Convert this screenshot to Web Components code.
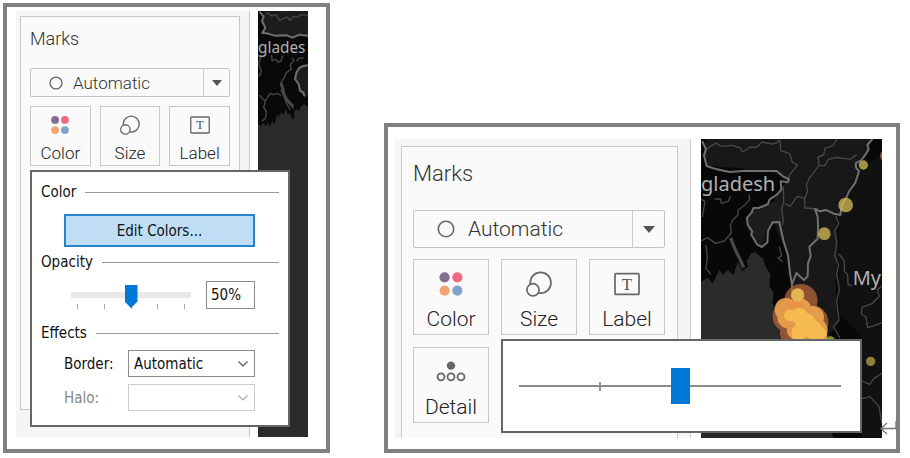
<!DOCTYPE html>
<html lang="en">
<head>
<meta charset="utf-8">
<title>Marks card</title>
<style>
body{margin:0;padding:3px 10px 5px 3px;background:#fff;font-family:Roboto,"Liberation Sans",sans-serif;font-weight:300}
</style>
</head>
<body>
<marks-page></marks-page>
<script>
const define=(name,html,setup)=>{
  const t=document.createElement('template');t.innerHTML=html;
  customElements.define(name,class extends HTMLElement{
    constructor(){super();this.attachShadow({mode:'open'}).append(t.content.cloneNode(true));}
    connectedCallback(){if(setup&&!this.ready){this.ready=true;setup(this,this.shadowRoot);}}
  });
};
const BASE='*{box-sizing:border-box}:host{box-sizing:border-box}';

define('figure-frame',`<style>${BASE}
:host{display:grid;grid-template-columns:minmax(0,234fr) minmax(0,50fr);border:4px solid #808080;background:#fff;position:relative;gap:8px;padding:4px 18px 12px 9px}
:host([size=large]){grid-template-columns:minmax(0,296fr) minmax(0,181fr);gap:10px;padding:12px 14px 11px 7px}
</style><slot></slot>`);

define('marks-panel',`<style>${BASE}
:host{--text:17px;--caption:17px;--title:18px;--line:24px;--field:29px;--icon:20px;--gap:9px;--tile-gap:9px;--tile-top:8px;--label-gap:7px;--label:22px;
 display:flex;min-width:0;background:#f5f5f5;border-right:1px solid #ccc;padding:5px 9px 27px 4px;position:relative;z-index:1}
:host([size=large]){--text:21px;--caption:21px;--title:22px;--line:30px;--field:38px;--icon:26px;--gap:11px;--tile-gap:12px;--tile-top:11px;--label-gap:8px;--label:28px;
 padding:7px 12px 0 6px}
section{flex:1;min-width:0;min-height:394px;background:#fafafa;border:1px solid #c8c8c8;padding:10px 9px 16px}
:host([size=large]) section{min-height:292px;border-bottom:0;padding:12px 12px 15px 11px}
h2{margin:0 0 17px;font-size:var(--title);line-height:var(--line);font-weight:300;color:#333}
:host([size=large]) h2{margin-bottom:21px}
.tiles{display:grid;grid-template-columns:repeat(3,minmax(0,1fr));gap:var(--tile-gap);margin-top:var(--gap)}
</style><section><h2>Marks</h2><mark-type></mark-type><div class="tiles"><slot></slot></div></section>`);

define('mark-type',`<style>${BASE}
:host{display:grid;height:var(--field);grid-template:1fr / minmax(0,1fr) var(--field);border:1px solid #c4c4c4;border-radius:2px;background:#fafafa;align-items:center}
select{grid-area:1/1/2/3;width:100%;height:100%;appearance:none;border:0;background:none;font:inherit;font-size:var(--text);color:#333;padding:0 0 0 calc(var(--icon) * 2 + 2px);margin:0}
.ring{grid-area:1/1;width:14px;height:14px;margin-left:18px;fill:none;stroke:#666;stroke-width:1.6}
.arrow{grid-area:1/2;justify-self:stretch;height:100%;display:grid;place-items:center;border-left:1px solid #ccc;margin-left:3px;pointer-events:none}
.arrow svg{width:10px;height:6px;fill:#555}
:host-context([size=large]) .ring{width:18px;height:18px;margin-left:23px}
:host-context([size=large]) .arrow{margin-left:6px}
:host-context([size=large]) .arrow svg{width:12px;height:7px}
</style><select aria-label="Mark type"><option>Automatic</option></select>
<svg class="ring" viewBox="0 0 18 18"><circle cx="9" cy="9" r="7.7"/></svg>
<span class="arrow"><svg viewBox="0 0 12 7"><path d="M0 0h12L6 7z"/></svg></span>`);

const ICONS={
 color:'<circle cx="6.6" cy="6.4" r="5.1" fill="#846d95"/><circle cx="19.4" cy="6.4" r="5.1" fill="#f0697f"/><circle cx="6.6" cy="19.6" r="5.1" fill="#f2a475"/><circle cx="19.4" cy="19.6" r="5.1" fill="#7fa3cc"/>',
 size:'<g fill="#fafafa" stroke="#666" stroke-width="1.7"><circle cx="14.6" cy="11.8" r="10.4"/><circle cx="7" cy="18.8" r="6.1"/></g>',
 label:'<rect x="1" y="2.6" width="24" height="20.8" rx="1" fill="none" stroke="#666" stroke-width="1.7"/><text x="13" y="18.8" text-anchor="middle" font-family="Liberation Serif,serif" font-weight="400" font-size="17" fill="#555">T</text>',
 detail:'<circle cx="13" cy="6.6" r="4.2" fill="#666"/><g fill="none" stroke="#666" stroke-width="1.8"><circle cx="3" cy="17.8" r="3.5"/><circle cx="13" cy="17.8" r="3.5"/><circle cx="23" cy="17.8" r="3.5"/></g>'
};
define('mark-tile',`<style>${BASE}
:host{display:block;position:relative;min-width:0}
button{display:flex;flex-direction:column;align-items:center;width:100%;margin:0;border:1px solid #c8c8c8;background:#fafafa;font:inherit;font-size:var(--caption);line-height:var(--label);color:#222;padding:var(--tile-top) 0 1px;gap:var(--label-gap)}
svg{display:block;width:var(--icon);height:var(--icon);overflow:visible}
::slotted(*){position:absolute;left:0;top:calc(100% + 4px);z-index:2}
</style><button type="button"><svg viewBox="0 0 26 26"></svg><span></span></button><slot></slot>`,(el,r)=>{
  r.querySelector('svg').innerHTML=ICONS[el.getAttribute('icon')];
  r.querySelector('span').textContent=el.getAttribute('label');
});

define('group-heading',`<style>${BASE}
:host{display:flex;align-items:center;gap:9px;line-height:20px}
:host::after{content:"";flex:1;border-top:1px solid #999}
</style><slot></slot>`);

define('option-select',`<style>${BASE}
:host{display:grid;grid-template-columns:64px minmax(0,1fr);align-items:center;color:#111}
:host([disabled]){color:#858585}
.box{display:grid;align-items:center}
select{grid-area:1/1;width:100%;height:27px;margin:0;padding:0 5px;appearance:none;font:inherit;color:inherit;background:#fff;border:1px solid #8c8c8c;border-radius:0;opacity:1}
:host([disabled]) select{border-color:#ccc}
svg{grid-area:1/1;justify-self:end;width:10px;height:6px;margin-right:7px;fill:none;stroke:#555;stroke-width:1.2;pointer-events:none}
:host([disabled]) svg{stroke:#aaa}
</style><label for="s"></label><span class="box"><select id="s"><option></option></select><svg viewBox="0 0 10 6"><path d="M.5.5 5 5 9.500.5"/></svg></span>`,(el,r)=>{
  r.querySelector('label').textContent=el.getAttribute('label');
  r.querySelector('option').textContent=el.getAttribute('value')||'';
  r.querySelector('select').disabled=el.hasAttribute('disabled');
});

define('color-popup',`<style>${BASE}
:host{display:block;width:260px;background:#fff;border:2px solid #666;padding:10px 9px 14px;font:400 15px "DejaVu Sans Condensed","Noto Sans",sans-serif;color:#111}
.inner{margin:0 24px 0 23px}
.edit{display:block;width:100%;height:33px;margin:0;border:2px solid #2484cc;background:#bfdef6;font:inherit;color:inherit;padding:0}
.mt{margin-top:12px}
.opacity{display:flex;gap:15px;align-items:center;margin-top:9px;padding-left:7px}
.track{flex:1;min-width:0;display:grid;height:28px}
input[type=range]{appearance:none;margin:0;width:100%;min-width:0;height:23px;margin-top:4px;background:linear-gradient(#e8e8e8,#e8e8e8) 0 7px/100% 6px no-repeat;grid-area:1/1}
input[type=range]::-webkit-slider-thumb{appearance:none;width:13px;height:23px;background:#0078d7;clip-path:polygon(0 0,100% 0,100% 72%,50% 100%,0 72%)}
.ticks{grid-area:1/1;align-self:end;display:flex;justify-content:space-between;padding:0 6px;height:5px}
.ticks i{width:1px;background:#aaa}
.num{width:49px;height:28px;margin:0;border:1px solid #8c8c8c;padding:0 4px;font:inherit;color:inherit}
option-select+option-select{margin-top:7px}
</style>
<group-heading>Color</group-heading>
<div class="inner mt"><button class="edit" type="button">Edit Colors...</button></div>
<group-heading style="margin-top:5px">Opacity</group-heading>
<div class="inner opacity"><span class="track"><span class="ticks"><i></i><i></i><i></i><i></i><i></i></span><input type="range" aria-label="Opacity" min="0" max="100" value="50"></span><input class="num" type="text" aria-label="Opacity percent" value="50%"></div>
<group-heading style="margin-top:14px">Effects</group-heading>
<div class="inner" style="margin-top:7px"><option-select label="Border:" value="Automatic"></option-select><option-select label="Halo:" disabled></option-select></div>`);

define('size-popup',`<style>${BASE}
:host{display:grid;width:361px;height:94px;background:#fff;border:2px solid #666;padding:0 19px 0 16px;align-items:center}
input{grid-area:1/1;appearance:none;width:100%;height:36px;margin:0;background:linear-gradient(#8a8a8a,#8a8a8a) 0 50%/100% 2px no-repeat,linear-gradient(#999,#999) 25% 50%/2px 9px no-repeat}
input::-webkit-slider-thumb{appearance:none;width:19px;height:36px;background:#0078d7}
</style><input type="range" aria-label="Size" min="0" max="100" value="50">`);

define('dark-map',`<style>${BASE}
:host{display:block;min-width:0;background:#2b2b2b;position:relative;overflow:hidden}
svg{position:absolute;inset:0;width:100%;height:100%;display:block}
.minor{fill:none;stroke:#484848;stroke-width:4;stroke-linejoin:round}
.major{fill:none;stroke:#707070;stroke-width:6;stroke-linejoin:round;stroke-linecap:round}
text{font-family:"Noto Sans",sans-serif;font-weight:400;fill:#b0b0b0}
</style><svg preserveAspectRatio="xMinYMin slice"></svg>`,(el,r)=>{
  const s=r.querySelector('svg');
  if(el.getAttribute('size')!=='large'){
    s.setAttribute('viewBox','54 33 150 1278');
    s.innerHTML=`<path fill="#090909" d="M54 33H204V322L192 312 181 322 176 333 169 326 162 337 164 353 155 358 151 340 143 343 137 327 130 346 124 336 117 350 113 341 103 371 96 363 91 382 83 367 79 379 70 370 62 377 54 373Z"/>
    <path fill="#1c1c1c" d="M70 33H204V104L176 103 164 113 145 107 113 109 78 98 67 101 74 84 65 67 72 53Z"/>
    <path fill="#1d1d1d" d="M204 200 190 198 178 204 170 216 165 237 176 252 180 272 190 285 204 290Z"/>
    <path class="minor" d="M80 38 96 48 107 43 119 61 140 51 150 61 160 49 173 52 183 44 204 46M54 165 62 173 56 191 64 213 58 230M95 165 96 182 108 178 114 187 124 182 127 167M158 173 161 184 151 193 154 208 139 218 132 235 123 247 127 260 124 275 135 282 141 301 153 317 161 326M123 286 112 280 99 284 91 280 83 291 76 303 68 296 57 285M76 303 71 322 79 335 77 353 66 364M170 184 176 175 191 174M130 282 139 309 151 330"/>
    <path class="minor" style="stroke-width:9" d="M123 249 128 265 132 286 145 305 160 319"/>
    <path class="major" d="M60 37 71 49 66 63 76 83 67 99 81 100 104 107 140 106 158 113 178 104 204 107M204 196 190 198 178 204 170 216 165 237 176 252 180 272 190 278 193 287"/>
    <text x="54" y="158" font-size="46">glades</text>`;
  }else{
    s.setAttribute('viewBox','33 57 543 897');
    s.innerHTML=`<path fill="#080808" d="M33 57H576V954H430L300 650 247 549 251 520 238 499 241 463 226 437 219 416 194 396 181 402 176 417 169 421 174 440 157 452 143 425 131 465 113 450 99 464 88 449 68 491 54 474 33 485Z"/>
    <path fill="#181818" d="M52 57H545L536 93 501 126 507 153 470 220 466 275 438 288 446 400 436 482 442 600 420 650 330 654 310 510 285 389 251 307 231 329 219 380 178 343 169 293 189 265 245 251 291 182 240 151 49 137 42 90Z"/>
    <path fill="#151515" d="M446 288 500 160 576 100V954H516V650L448 580Z" opacity=".7"/>
    <path fill="#222" d="M189 265 171 304 185 346 210 378 231 329 251 307 278 320 274 253 240 245Z" opacity=".55"/>
    <path class="minor" d="M52 86 77 69 94 79 127 76 151 84 158 96 180 81 200 82 216 66 245 72 262 68 266 59M270 60 272 92 299 101 307 127 323 135 299 164 293 181M440 57 429 77 405 85 401 105 384 111 387 136 357 176 349 195 353 213 344 237 345 264 383 267M385 137 404 137 415 118 441 112 480 118 500 104M280 199 281 243 275 270 280 299 277 315M284 251 301 259 321 229 347 235M177 223 179 239 168 252 145 270 143 286 129 299 121 316 124 339 103 363 77 370 53 353 33 363M33 238 45 244 37 291M74 237 92 237 94 250 115 244 121 229M48 376 52 414 48 446 63 463M438 288 446 311 434 333 440 368 434 407 446 434 440 461 448 509 440 544 447 600 431 621 450 654M446 401 463 423 463 453 473 465 474 494 486 497M576 498 562 510 568 529 546 551 516 562 514 582 528 591 533 623 552 617 576 608M268 380 275 407 264 414 278 425M517 783 539 793 552 776 576 760M516 836 540 830 567 860 576 910"/>
    <path class="minor" style="stroke-width:10" d="M122 354 134 385 151 420 161 443"/>
    <path class="major" d="M38 66 48 88 42 106 50 138 80 148 119 156 169 152 216 153 260 153 279 169 297 178 293 187 272 184 274 209 261 224 239 238 233 253 209 263 190 264 185 278 171 293 173 315 187 334 184 344 202 374 216 381 232 367 234 333 248 307 268 306 274 334 281 365 294 405 300 460 306 493 319 459 342 480 353 469 354 430 362 408 358 380 383 356 384 320 383 290 375 267 390 274 408 270 432 281 451 285 456 252 470 231 476 216 496 188 507 153 498 143 497 130 514 120 529 100 536 88 532 75 546 58M306 493 305 532"/>
    <text x="33" y="214" font-size="60">gladesh</text><text x="488" y="495" font-size="60">My</text>
    <g fill="#d6bf55" opacity=".75"><circle cx="520" cy="135" r="14"/><circle cx="467" cy="255" r="22"/><circle cx="403" cy="341" r="19"/></g><circle cx="542" cy="724" r="14" fill="#8c7f38"/>
    <circle cx="588" cy="107" r="18" fill="#945234"/>
    <g fill="#a96138" opacity=".8"><circle cx="333" cy="542" r="50"/><circle cx="294" cy="590" r="46"/><circle cx="365" cy="606" r="50"/><circle cx="310" cy="638" r="40"/></g>
    <circle cx="421" cy="664" r="15" fill="#8f8a34"/>
    <g fill="#efa350" opacity=".9"><circle cx="288" cy="568" r="34"/><circle cx="328" cy="570" r="36"/><circle cx="368" cy="592" r="34"/><circle cx="296" cy="592" r="34"/><circle cx="380" cy="630" r="33"/><circle cx="322" cy="628" r="32"/></g>
    <g fill="#fbc352" opacity=".8"><circle cx="300" cy="586" r="18"/><circle cx="328" cy="588" r="24"/><circle cx="346" cy="608" r="30"/><circle cx="364" cy="632" r="32"/><circle cx="334" cy="640" r="30"/><circle cx="382" cy="648" r="30"/></g>
    <circle cx="323" cy="525" r="20" fill="#e4b64f"/><ellipse cx="316" cy="554" rx="24" ry="10" fill="#ec8c48" opacity=".7"/>`;
  }
});

define('return-mark',`<style>${BASE}
:host{display:block;position:absolute;right:-2px;bottom:14px;width:18px;height:14px}
svg{display:block;width:100%;height:100%;fill:none;stroke:#777;stroke-width:1.3}
</style><svg viewBox="0 0 18 14"><path d="M16 0v7.500H1M7 2 1 7.500 7 13"/></svg>`);

define('marks-page',`<style>${BASE}
:host{display:grid;grid-template-columns:minmax(0,327fr) minmax(0,516fr);gap:54px;align-items:end}
</style>
<figure-frame>
 <marks-panel>
  <mark-tile icon="color" label="Color"><color-popup></color-popup></mark-tile>
  <mark-tile icon="size" label="Size"></mark-tile>
  <mark-tile icon="label" label="Label"></mark-tile>
 </marks-panel>
 <dark-map></dark-map>
</figure-frame>
<figure-frame size="large">
 <marks-panel size="large">
  <mark-tile icon="color" label="Color"></mark-tile>
  <mark-tile icon="size" label="Size"><size-popup></size-popup></mark-tile>
  <mark-tile icon="label" label="Label"></mark-tile>
  <mark-tile icon="detail" label="Detail"></mark-tile>
 </marks-panel>
 <dark-map size="large"></dark-map>
 <return-mark></return-mark>
</figure-frame>`);
</script>
</body>
</html>
